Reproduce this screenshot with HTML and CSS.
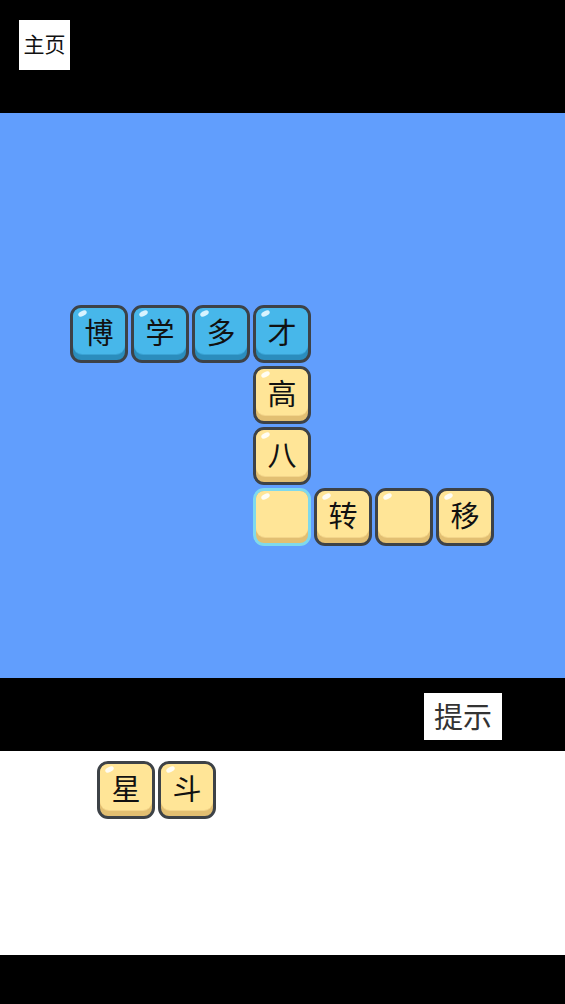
FILE: index.html
```html
<!DOCTYPE html>
<html lang="zh">
<head>
<meta charset="utf-8">
<title>成语填字</title>
<link rel="stylesheet" href="styles.css">
</head>
<body>
<div class="app">
  <header class="top">
    <button class="home">主页</button>
  </header>
  <main class="board">
    <div class="grid">
      <div class="tile blue c1 r1"><span class="face">博</span></div>
      <div class="tile blue c2 r1"><span class="face">学</span></div>
      <div class="tile blue c3 r1"><span class="face">多</span></div>
      <div class="tile blue c4 r1"><span class="face">才</span></div>
      <div class="tile c4 r2"><span class="face">高</span></div>
      <div class="tile c4 r3"><span class="face">八</span></div>
      <div class="tile active c4 r4"><span class="face"></span></div>
      <div class="tile c5 r4"><span class="face">转</span></div>
      <div class="tile c6 r4"><span class="face"></span></div>
      <div class="tile c7 r4"><span class="face">移</span></div>
    </div>
  </main>
  <div class="bar">
    <button class="hint">提示</button>
  </div>
  <section class="tray">
    <div class="tile"><span class="face">星</span></div>
    <div class="tile"><span class="face">斗</span></div>
  </section>
  <footer class="bottom"></footer>
</div>
</body>
</html>
```
FILE: styles.css
```css
html, body {
  margin: 0;
  padding: 0;
  background: #000;
}
body {
  font-family: "Noto Sans CJK SC", "Noto Sans", sans-serif;
}
.app {
  width: 565px;
  height: 1004px;
  display: flex;
  flex-direction: column;
}
.top {
  height: 113px;
  padding: 20px 0 0 19px;
  box-sizing: border-box;
}
.home {
  width: 51px;
  height: 50px;
  border: 0;
  padding: 0 0 4px;
  background: #fff;
  color: #111;
  font-family: inherit;
  font-size: 21px;
  line-height: 46px;
  letter-spacing: 0;
}
.board {
  height: 565px;
  background: #619efd;
  padding: 192px 0 0 70px;
  box-sizing: border-box;
}
.grid {
  display: grid;
  grid-template-columns: repeat(7, 58px);
  grid-template-rows: repeat(4, 58px);
  gap: 3px;
}
.c1 { grid-column: 1; } .c2 { grid-column: 2; } .c3 { grid-column: 3; }
.c4 { grid-column: 4; } .c5 { grid-column: 5; } .c6 { grid-column: 6; }
.c7 { grid-column: 7; }
.r1 { grid-row: 1; } .r2 { grid-row: 2; } .r3 { grid-row: 3; } .r4 { grid-row: 4; }

.tile {
  width: 58px;
  height: 58px;
  box-sizing: border-box;
  border: 3px solid #3d4247;
  border-radius: 11px;
  background: #e2bf72;
  position: relative;
  overflow: hidden;
}
.tile .face {
  display: flex;
  align-items: center;
  justify-content: center;
  height: 45px;
  border-radius: 8px 8px 9px 9px;
  background: #ffe597;
  box-shadow: 0 1px 0 #f3d58a;
  color: #111;
  font-size: 29px;
  line-height: 1;
  padding-top: 1px;
  box-sizing: content-box;
}
.tile::before {
  content: "";
  position: absolute;
  left: 5px;
  top: 3px;
  width: 9px;
  height: 5px;
  border-radius: 50%;
  background: #fffdf4;
  transform: rotate(-25deg);
  z-index: 1;
}
.tile.blue {
  background: #2b8dbd;
}
.tile.blue .face {
  background: #47b7ea;
  box-shadow: 0 1px 0 #3aa3d4;
}
.tile.blue::before {
  background: #d8f3ff;
}
.tile.active {
  border-color: #7fd9ec;
}
.bar {
  height: 73px;
  display: flex;
  justify-content: flex-end;
  align-items: flex-start;
  padding: 15px 63px 0 0;
  box-sizing: border-box;
}
.hint {
  width: 78px;
  height: 47px;
  border: 0;
  padding: 0 0 2px;
  background: #fff;
  color: #333;
  font-family: inherit;
  font-size: 29px;
  line-height: 45px;
}
.tray {
  height: 204px;
  background: #fff;
  display: flex;
  gap: 3px;
  padding: 10px 0 0 97px;
  box-sizing: border-box;
}
.bottom {
  flex: 1;
  background: #000;
}
```
